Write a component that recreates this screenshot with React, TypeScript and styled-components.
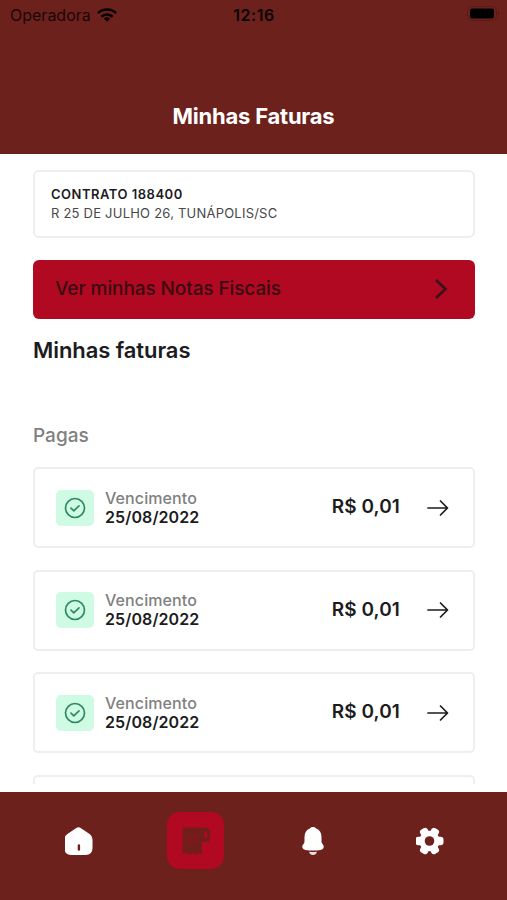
import React from "react";
import styled, { createGlobalStyle } from "styled-components";

const colors = {
  wine: "#6c211d",
  red: "#b10921",
  ink: "#1c1c1e",
  muted: "#808080",
  line: "#eeeeee",
};

const GlobalStyle = createGlobalStyle`
  *, *::before, *::after { box-sizing: border-box; }
  body {
    margin: 0;
    background: #fff;
    font-family: Inter, "Liberation Sans", sans-serif;
    color: ${colors.ink};
  }
  button { font: inherit; color: inherit; border: 0; background: none; padding: 0; text-align: left; }
  h1, h2, h3, p { margin: 0; }
`;

const Screen = styled.div`
  display: flex;
  flex-direction: column;
  width: 507px;
  height: 900px;
  overflow: hidden;
  white-space: nowrap;
`;

const Header = styled.header`
  flex: none;
  height: 154px;
  background: ${colors.wine};
`;

const StatusBar = styled.div`
  display: grid;
  grid-template-columns: 1fr auto 1fr;
  align-items: center;
  height: 30px;
  padding: 0 8px 0 10px;
  color: #0b0202;
`;

const Carrier = styled.span`
  display: flex;
  align-items: center;
  gap: 6px;
  font-size: 16px;
  color: #1c0706;
`;

const Clock = styled.span`
  font-size: 16px;
  font-weight: 600;
  letter-spacing: 0.5px;
  margin: -1px 0 0 -1px;
`;

const BatterySlot = styled.span`
  display: flex;
  justify-content: flex-end;
  margin-top: -3px;
`;

const Title = styled.h1`
  margin-top: 72px;
  color: #fff;
  font-size: 22px;
  line-height: 28px;
  font-weight: 700;
  letter-spacing: -0.22px;
  text-align: center;
`;

const Content = styled.main`
  flex: none;
  height: 630px;
  padding: 16px 32px 0 33px;
  overflow: hidden;
`;

const Contract = styled.section`
  height: 68px;
  padding: 13px 16px;
  border: 2px solid ${colors.line};
  border-radius: 6px;
  font-size: 13px;
  line-height: 19px;
`;

const ContractName = styled.p`
  font-weight: 600;
  letter-spacing: 0.5px;
`;

const ContractAddress = styled.p`
  color: #48484a;
  letter-spacing: 0.22px;
`;

const NotesButton = styled.button`
  display: flex;
  align-items: center;
  justify-content: space-between;
  width: 100%;
  height: 59px;
  margin-top: 22px;
  padding: 0 27px 1px 22px;
  border-radius: 6px;
  background: ${colors.red};
  color: #380c12;
  font-size: 19px;
  line-height: 24px;
  font-weight: 500;
  letter-spacing: -0.1px;
`;

const SectionTitle = styled.h2`
  margin-top: 17px;
  font-size: 22px;
  line-height: 28px;
  font-weight: 600;
  letter-spacing: -0.08px;
`;

const GroupTitle = styled.h3`
  margin-top: 60px;
  color: ${colors.muted};
  font-size: 19px;
  line-height: 24px;
  font-weight: 500;
`;

const InvoiceList = styled.div`
  display: flex;
  flex-direction: column;
  gap: 21.5px;
  margin-top: 19px;
`;

const Invoice = styled.button`
  display: flex;
  flex: none;
  align-items: center;
  width: 100%;
  height: 81px;
  padding: 0 24px 0 21px;
  border: 2px solid ${colors.line};
  border-radius: 5px;
`;

const PaidBadge = styled.span`
  display: flex;
  align-items: center;
  justify-content: center;
  width: 38px;
  height: 36px;
  border-radius: 5px;
  background: #cffae3;
  color: #2f8a64;
`;

const DueDate = styled.span`
  display: flex;
  flex: 1;
  flex-direction: column;
  margin-left: 11px;
  font-size: 16px;
  line-height: 19px;
  font-weight: 600;
  letter-spacing: 0.1px;
`;

const DueLabel = styled.span`
  color: ${colors.muted};
  font-weight: 500;
`;

const Amount = styled.span`
  margin: -2px 27px 0 0;
  font-size: 19px;
  font-weight: 600;
  letter-spacing: 0.1px;
`;

const TabBar = styled.nav`
  display: grid;
  grid-template-columns: repeat(4, 117px);
  flex: none;
  align-items: start;
  justify-items: center;
  height: 108px;
  margin-top: 8px;
  padding: 20px 0 0 20px;
  background: ${colors.wine};
`;

const Tab = styled.button<{ $active?: boolean }>`
  display: flex;
  align-items: center;
  justify-content: center;
  width: 57px;
  height: 57px;
  border-radius: 13px;
  background: ${({ $active }) => ($active ? colors.red : "transparent")};
  color: ${({ $active }) => ($active ? "#701d1c" : "#fff")};
`;

const WifiIcon = () => (
  <svg width="20" height="14" viewBox="0 0 20 14" fill="none" stroke="#0b0202" strokeWidth="2.6">
    <path d="M.9 5.1a13.2 13.2 0 0 1 18.2 0" />
    <path d="M4.4 8.7a8.2 8.2 0 0 1 11.2 0" />
    <path d="M10 13.8 6.9 10.7a4.5 4.5 0 0 1 6.2 0Z" fill="#0b0202" stroke="none" />
  </svg>
);

const BatteryIcon = () => (
  <svg width="32" height="15" viewBox="0 0 32 15">
    <rect x=".5" y=".5" width="29" height="14" rx="4" fill="none" stroke="#5a1a17" />
    <rect x="3" y="2.5" width="24" height="10" rx="2" fill="#000" />
    <path d="M31 5.5q2 2 0 4Z" fill="#4d1714" />
  </svg>
);

const ChevronIcon = () => (
  <svg width="14" height="22" viewBox="0 0 14 22" fill="none" stroke="#38131a" strokeWidth="2.6">
    <path d="m2 2 9.5 9L2 20" />
  </svg>
);

const CheckIcon = () => (
  <svg width="22" height="22" viewBox="0 0 22 22" fill="none" stroke="currentColor" strokeWidth="1.7">
    <circle cx="11" cy="11" r="9.5" />
    <path d="m7 11.2 2.8 2.6 5.2-5" strokeLinecap="round" strokeLinejoin="round" />
  </svg>
);

const ArrowIcon = () => (
  <svg width="22" height="18" viewBox="0 0 22 18" fill="none" stroke={colors.ink} strokeWidth="1.7" strokeLinecap="round" strokeLinejoin="round">
    <path d="M1 9h19.5M13.5 2l7 7-7 7" />
  </svg>
);

const HomeIcon = () => (
  <svg width="28" height="28" viewBox="0 0 28 28">
    <path
      fill="currentColor"
      fillRule="evenodd"
      d="M11.3.9Q13.500-.6 15.700.9l9.200 6.400Q27.500 9.200 27.500 12.200V21q0 7-7 7h-14q-7 0-7-7v-8.800Q-.5 9.200 2.100 7.300ZM12.700 18.500v4a1.100 1.100 0 0 0 2.400 0v-4a1.200 1.200 0 0 0-2.400 0Z"
    />
  </svg>
);

const ReceiptIcon = () => (
  <svg width="28" height="28" viewBox="0 0 28 28">
    <path
      fill="currentColor"
      d="M3 .7h20.5Q28 .7 28 5.5v6.8q0 2.200-2.200 2.200H20v13l-3-1.700-3.200 1.900-3-2-3 2-3.200-1.900L.5 27V3.200Q.5.7 3 .7Z"
    />
    <path d="M22.200 10.500V6.500q0-2.300 1.600-2.300t1.600 2.300v4Z" fill={colors.red} />
    <path d="M6 9.5h8.500M6 14.500h8.500" stroke="#8a171f" strokeWidth="1.500" strokeLinecap="round" />
  </svg>
);

const BellIcon = () => (
  <svg width="22" height="28" viewBox="0 0 22 28" fill="currentColor">
    <path d="M11 0Q13 0 14.200 1.400Q19.500 3.500 19.500 10V14.500Q19.500 16 20.700 17.300Q22.200 19 21.500 21Q20.800 22.700 18.500 23Q11 24 3.500 23Q1.200 22.700.5 21Q-.2 19 1.300 17.300Q2.500 16 2.500 14.500V10Q2.500 3.500 7.800 1.400Q9 0 11 0Z" />
    <path d="M7 24.800q4 .5 8 0Q14 28 11 28T7 24.800Z" opacity=".85" />
  </svg>
);

const teeth = [0, 60, 120, 180, 240, 300];

const GearIcon = () => (
  <svg width="28" height="28" viewBox="0.5 0 28 28">
    <g fill="currentColor">
      <circle cx="14" cy="14" r="10.2" />
      {teeth.map((angle) => (
        <rect key={angle} x="20" y="9.8" width="8" height="8.4" rx="3" transform={`rotate(${angle} 14 14)`} />
      ))}
    </g>
    <circle cx="14" cy="14" r="4.8" fill={colors.wine} />
  </svg>
);

const invoices = [1, 2, 3].map((id) => ({ id, due: "25/08/2022", amount: "R$ 0,01" }));

export default function App() {
  return (
    <>
      <GlobalStyle />
      <Screen>
        <Header>
          <StatusBar>
            <Carrier>
              Operadora
              <WifiIcon />
            </Carrier>
            <Clock>12:16</Clock>
            <BatterySlot>
              <BatteryIcon />
            </BatterySlot>
          </StatusBar>
          <Title>Minhas Faturas</Title>
        </Header>
        <Content>
          <Contract>
            <ContractName>CONTRATO 188400</ContractName>
            <ContractAddress>R 25 DE JULHO 26, TUNÁPOLIS/SC</ContractAddress>
          </Contract>
          <NotesButton>
            Ver minhas Notas Fiscais
            <ChevronIcon />
          </NotesButton>
          <SectionTitle>Minhas faturas</SectionTitle>
          <GroupTitle>Pagas</GroupTitle>
          <InvoiceList>
            {invoices.map(({ id, due, amount }) => (
              <Invoice key={id}>
                <PaidBadge>
                  <CheckIcon />
                </PaidBadge>
                <DueDate>
                  <DueLabel>Vencimento</DueLabel>
                  {due}
                </DueDate>
                <Amount>{amount}</Amount>
                <ArrowIcon />
              </Invoice>
            ))}
            <Invoice />
          </InvoiceList>
        </Content>
        <TabBar>
          <Tab>
            <HomeIcon />
          </Tab>
          <Tab $active>
            <ReceiptIcon />
          </Tab>
          <Tab>
            <BellIcon />
          </Tab>
          <Tab>
            <GearIcon />
          </Tab>
        </TabBar>
      </Screen>
    </>
  );
}
